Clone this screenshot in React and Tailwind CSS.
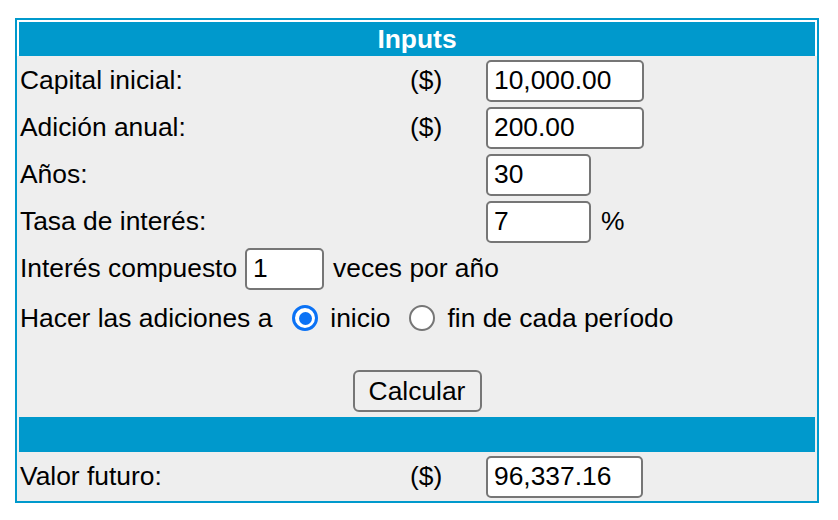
import React, { useState } from "react";

const inputCls =
  "h-[42px] border-2 border-[#767676] rounded-[5px] bg-white px-[6px] text-[26.4px] text-black outline-none";

const Row = ({ children, className = "" }) => (
  <div className={`flex items-center h-[47px] pl-[3px] ${className}`}>{children}</div>
);

const Radio = ({ checked, onClick }) =>
  checked ? (
    <span
      onClick={onClick}
      className="w-[26px] h-[26px] rounded-full border-[3px] border-[#0b72f5] bg-white flex items-center justify-center shrink-0"
    >
      <span className="block w-[13px] h-[13px] rounded-full bg-[#0b72f5]" />
    </span>
  ) : (
    <span
      onClick={onClick}
      className="block w-[26px] h-[26px] rounded-full border-2 border-[#767676] bg-white shrink-0"
    />
  );

export default function App() {
  const [when, setWhen] = useState("inicio");
  const [data, setData] = useState({
    capital: "10,000.00",
    adicion: "200.00",
    anos: "30",
    tasa: "7",
    veces: "1",
  });
  const set = (k) => (e) => setData({ ...data, [k]: e.target.value });

  return (
    <div
      className="min-h-screen bg-white pt-[18px] pl-[15px] text-black text-[26.4px] leading-none"
      style={{ fontFamily: '"Liberation Sans", Arial, sans-serif' }}
    >
      <div className="w-[804px] h-[485px] border-2 border-[#0099cc] bg-[#eeeeee]">
        {/* header */}
        <div className="h-[36px] border-2 border-b-0 border-white bg-[#0099cc] text-white font-bold text-center leading-[34px]">
          Inputs
        </div>

        <div className="mt-[1px]">
          <Row>
            <span className="w-[390px]">Capital inicial:</span>
            <span className="w-[76px]">($)</span>
            <input className={`${inputCls} w-[158px]`} value={data.capital} onChange={set("capital")} />
          </Row>
          <Row>
            <span className="w-[390px]">Adición anual:</span>
            <span className="w-[76px]">($)</span>
            <input className={`${inputCls} w-[158px]`} value={data.adicion} onChange={set("adicion")} />
          </Row>
          <Row>
            <span className="w-[466px]">Años:</span>
            <input className={`${inputCls} w-[105px]`} value={data.anos} onChange={set("anos")} />
          </Row>
          <Row>
            <span className="w-[466px]">Tasa de interés:</span>
            <input className={`${inputCls} w-[105px]`} value={data.tasa} onChange={set("tasa")} />
            <span className="ml-[10px]">%</span>
          </Row>
          <Row>
            <span>Interés compuesto</span>
            <input className={`${inputCls} w-[79px] ml-[8px]`} value={data.veces} onChange={set("veces")} />
            <span className="ml-[9px]">veces por año</span>
          </Row>
          <div className="flex items-center h-[52px] pl-[3px]">
            <span>Hacer las adiciones a</span>
            <span className="ml-[20px] flex">
              <Radio checked={when === "inicio"} onClick={() => setWhen("inicio")} />
            </span>
            <span className="ml-[12px]">inicio</span>
            <span className="ml-[19px] flex">
              <Radio checked={when === "fin"} onClick={() => setWhen("fin")} />
            </span>
            <span className="ml-[12px]">fin de cada período</span>
          </div>

          <div className="h-[73px] pt-[26px] flex justify-center">
            <button className="h-[42px] w-[129px] border-2 border-[#767676] rounded-[6px] bg-[#efefef] text-[26.4px]">
              Calcular
            </button>
          </div>

          <div className="mx-[2px] h-[35px] bg-[#0099cc]" />

          <div className="flex items-center h-[49px] pl-[3px]">
            <span className="w-[390px]">Valor futuro:</span>
            <span className="w-[76px]">($)</span>
            <input className={`${inputCls} w-[157px] h-[41px]`} value="96,337.16" readOnly />
          </div>
        </div>
      </div>
    </div>
  );
}
